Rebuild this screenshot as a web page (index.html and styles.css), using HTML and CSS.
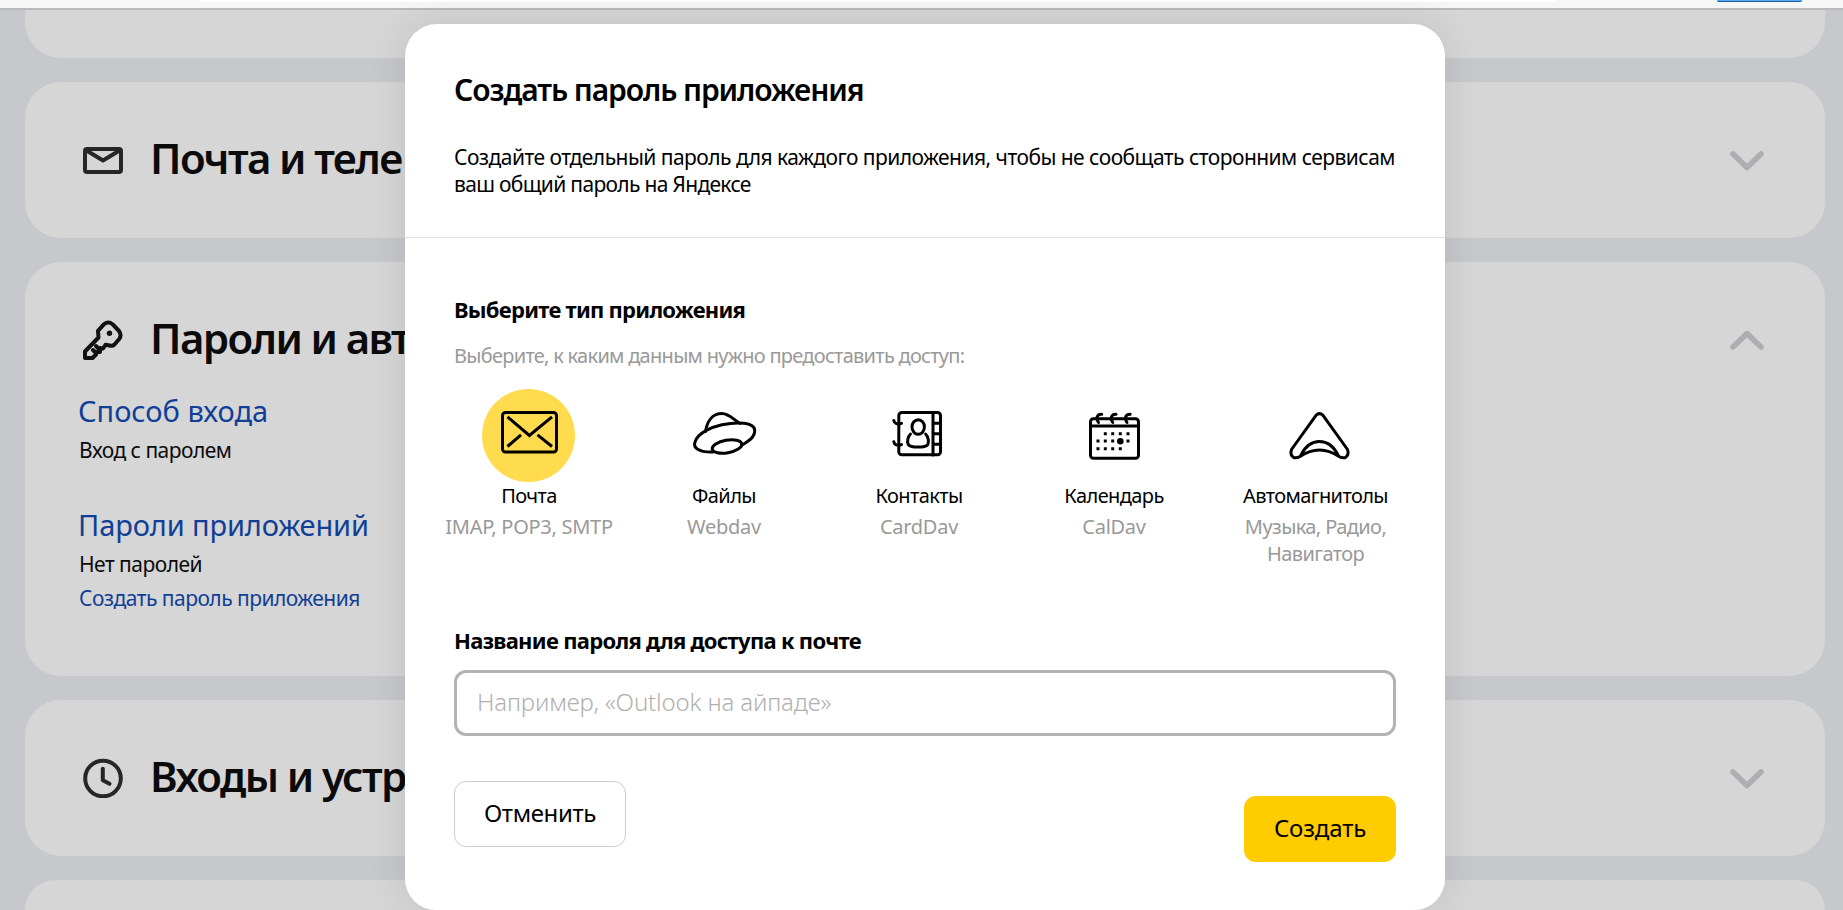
FILE: index.html
```html
<!DOCTYPE html>
<html lang="ru">
<head>
<meta charset="utf-8">
<title>Пароли приложений</title>
<link rel="stylesheet" href="styles.css">
</head>
<body>
<div class="browser-bar"><div class="address"></div><div class="profile-chip"></div></div>
<main class="page">
  <section class="card card-cut"></section>
  <section class="card">
    <header class="card-head">
      <svg class="card-icon" viewBox="0 0 40 40"><rect x="2" y="9" width="36" height="23" rx="2"/><path d="M3.500 10.500L20 20.500L36.500 10.500"/></svg>
      <h2 class="card-title">Почта и теле</h2>
      <svg class="chevron" viewBox="0 0 34 20"><path d="M3 3L17 16.500L31 3"/></svg>
    </header>
  </section>
  <section class="card card-open">
    <header class="card-head">
      <svg class="card-icon key" viewBox="0 0 40 40"><path d="M15 10.800L21 4.200Q25.300 0.800 29.500 4.200L36 11Q39 15.200 36.200 19L31.500 24.500Q29.500 26.500 26.500 25.500L22.500 24.800L20 28.500L17 28L17 32L13.500 32L13 34.500L9.500 38H2V31.500L15.500 17.500Z"/><path d="M13 26l4 4M10 30l3 3"/><circle cx="26.500" cy="13.300" r="2.700"/></svg>
      <h2 class="card-title">Пароли и авт</h2>
      <svg class="chevron" viewBox="0 0 34 20"><path d="M3 16L17 2.500L31 16"/></svg>
    </header>
    <div class="item">
      <a class="item-title">Способ входа</a>
      <p class="item-text">Вход с паролем</p>
    </div>
    <div class="item">
      <a class="item-title item-title-long">Пароли приложений</a>
      <p class="item-text">Нет паролей</p>
      <a class="item-link">Создать пароль приложения</a>
    </div>
  </section>
  <section class="card">
    <header class="card-head">
      <svg class="card-icon" viewBox="0 0 40 40"><circle cx="20" cy="20.500" r="17.800"/><path d="M19.800 10.700V22.300L26.500 25.800"/></svg>
      <h2 class="card-title">Входы и устр</h2>
      <svg class="chevron" viewBox="0 0 34 20"><path d="M3 3L17 16.500L31 3"/></svg>
    </header>
  </section>
  <section class="card card-next"></section>
</main>
<div class="dialog" role="dialog">
  <header class="dialog-head">
    <h1 class="dialog-title">Создать пароль приложения</h1>
    <p class="dialog-text">Создайте отдельный пароль для каждого приложения, чтобы не сообщать сторонним сервисам<br><span class="dialog-text-end">ваш общий пароль на Яндексе</span></p>
  </header>
  <form class="dialog-form">
    <h3 class="field-title">Выберите тип приложения</h3>
    <p class="hint">Выберите, к каким данным нужно предоставить доступ:</p>
    <div class="types">
      <div class="type selected">
        <svg class="type-icon" viewBox="0 0 93 93"><rect x="20.500" y="23.500" width="54" height="39.500" rx="3"/><path d="M25.500 27.800L47.400 46.500L70 27.800M25.500 57.500L39 45.800M70 57.500L55.500 45.800"/></svg>
        <div class="type-name">Почта</div><div class="type-sub">IMAP, POP3, SMTP</div>
      </div>
      <div class="type">
        <svg class="type-icon" viewBox="-1 0 93 93"><path d="M35 63C20 63.500 15 58.500 17 53C20 43.500 34 38 44 35.800C60 32.500 76 33.500 76.700 41C77 48 71 52 64 56"/><path d="M27.500 42.500C29 33 34 24.500 44 24.500C51 24.500 56 31 62 34.300"/><ellipse cx="49" cy="57.500" rx="15" ry="6.300" transform="rotate(-10 49 57.500)"/></svg>
        <div class="type-name">Файлы</div><div class="type-sub">Webdav</div>
      </div>
      <div class="type">
        <svg class="type-icon" viewBox="-1 0 93 93"><rect x="25.800" y="23.500" width="41.700" height="42.300" rx="3"/><path d="M60 23.500V66M60 34.300H67M60 44.700H67M60 55.300H67M20.800 31.500C21.300 34.500 24.300 36 28.500 34.300M20.800 52.800C21.300 55.800 24.300 57.300 28.500 55.600"/><ellipse cx="45.200" cy="38" rx="6.200" ry="7.300"/><path d="M37.500 45C34.500 48 34 53 35.300 55.500C37 58.900 53 58.900 54.800 55.500C56 53 55.600 48 52.600 45"/></svg>
        <div class="type-name">Контакты</div><div class="type-sub">CardDav</div>
      </div>
      <div class="type">
        <svg class="type-icon" viewBox="-1 0 93 93"><rect x="22.500" y="29.800" width="48" height="39.400" rx="3"/><path d="M22.500 37H70.500M30.500 33.500C27.500 29 29 25.300 33.700 25.300M44.800 33.500C41.800 29 43.300 25.300 48 25.300M59 33.500C56 29 57.500 25.300 62.200 25.300"/><path class="dots" d="M35.800 44.700h3M43.200 44.700h3M50.800 44.700h3M58.500 44.700h3M28.500 52h3M35.800 52h3M43.200 52h3M58.500 52h3M28.500 59.700h3M35.800 59.700h3M43.200 59.700h3M50.800 59.700h3"/><circle class="solid" cx="52.300" cy="52.200" r="3.300"/></svg>
        <div class="type-name">Календарь</div><div class="type-sub">CalDav</div>
      </div>
      <div class="type">
        <svg class="type-icon" viewBox="0 0 93 93"><path d="M47 26.300Q50.500 22.800 54 26.300L78.500 60.500Q80.500 66 76 68.700Q73 69.300 70 67.500Q50.500 54.500 31 67.500Q28 69.300 25 68.700Q20.500 66 22.500 60.500Z"/><path d="M32 66C41 48 60 48 69 66"/></svg>
        <div class="type-name">Автомагнитолы</div><div class="type-sub type-sub-long">Музыка, Радио,<br>Навигатор</div>
      </div>
    </div>
    <h3 class="field-title name-title">Название пароля для доступа к почте</h3>
    <div class="input">Например, «Outlook на айпаде»</div>
    <footer class="actions"><button type="button" class="btn cancel">Отменить</button><button type="button" class="btn create">Создать</button></footer>
  </form>
</div>
</body>
</html>
```
FILE: styles.css
```css
* { box-sizing: border-box; margin: 0; }
html { height: 910px; overflow: hidden; }
body { height: 910px; overflow: hidden; background: #c7c8cc; color: #000; font-family: "Noto Sans", sans-serif; font-size: 21px; line-height: 27px; }
.browser-bar { height: 10px; padding: 0 41px 0 200px; display: flex; justify-content: space-between; background: #f6f6f6; border-bottom: 2px solid #b9b9bb; }
.address { width: 1356px; height: 2px; background: #fff; }
.profile-chip { width: 85px; height: 2px; background: #5aa9ee; border-bottom: 1px solid #17619f; border-radius: 0 0 8px 8px; }
.page { display: flex; flex-direction: column; gap: 24px; height: 900px; overflow: hidden; padding: 0 18px 0 25px; }
.card { height: 156px; flex: none; padding: 39px 61px 0 54px; border-radius: 36px; background: #d6d6d6; }
.card-cut { height: 48px; border-radius: 0 0 36px 36px; }
.card-open { height: 414px; }
.card-next { height: 30px; padding: 0; border-radius: 36px 36px 0 0; }
.card-head { display: flex; align-items: center; height: 78px; padding-left: 4px; }
.card-icon { width: 40px; height: 40px; fill: none; stroke: #262626; stroke-width: 4; stroke-linejoin: round; stroke-linecap: round; }
.card-icon.key { stroke: #111; }
.key circle { fill: #111; stroke: none; }
.card-title { flex: 1; margin-left: 27px; padding-bottom: 4px; color: #0b0b0b; font-size: 42px; line-height: 74px; font-weight: 600; letter-spacing: -1.6px; white-space: nowrap; }
.chevron { width: 34px; height: 20px; margin-top: 1px; fill: none; stroke: #acaeb2; stroke-width: 5.6; stroke-linecap: round; stroke-linejoin: round; }
.item { display: flex; flex-direction: column; margin-top: 14px; }
.item + .item { margin-top: 43px; }
.item-title { font-size: 29px; line-height: 36px; color: #113f97; margin-left: -1px; }
.item-title-long { letter-spacing: -.12px; }
.item-text { margin-top: 8px; color: #0b0b0b; letter-spacing: -.52px; }
.item-link { margin-top: 7px; color: #113f97; letter-spacing: -.53px; }
.dialog { position: absolute; left: 405px; top: 24px; width: 1040px; height: 886px; background: #fff; border-radius: 32px 32px 31px 31px; box-shadow: 0 0 40px rgba(0, 0, 0, .1); }
.dialog-head { padding: 48px 49px 39px; border-bottom: 1px solid #e2e2e2; }
.dialog-title { font-size: 30px; line-height: 36px; font-weight: 600; letter-spacing: -1.08px; }
.dialog-text { margin-top: 36px; white-space: nowrap; letter-spacing: -.53px; }
.dialog-text-end { letter-spacing: -.68px; }
.dialog-form { padding: 56px 49px 0; }
.field-title { font-size: 22px; line-height: 30px; font-weight: 700; letter-spacing: -.74px; }
.hint { margin-top: 18px; color: #999; font-size: 20px; letter-spacing: -.72px; white-space: nowrap; }
.types { display: grid; grid-template-columns: repeat(4, 195px) 208px; margin: 20px 0 0 -23px; font-size: 20px; text-align: center; white-space: nowrap; }
.type { display: flex; flex-direction: column; align-items: center; }
.type-icon { width: 93px; height: 93px; border-radius: 50%; fill: none; stroke: #000; stroke-width: 3; stroke-linecap: round; stroke-linejoin: round; }
.selected .type-icon { background: #ffdb4d; stroke-linecap: butt; stroke-linejoin: miter; }
.type-icon .dots { stroke-linecap: butt; }
.type-icon .solid { fill: #000; stroke: none; }
.type-name { padding-left: 1px; letter-spacing: -.6px; }
.type-sub { margin-top: 4px; padding-left: 1px; color: #999; letter-spacing: -.28px; }
.type-sub-long { letter-spacing: -.6px; }
.name-title { margin-top: 58px; letter-spacing: -.7px; }
.input { height: 66px; margin-top: 15px; padding: 0 20px; border: 3px solid #b3b3b3; border-radius: 12px; color: #b0b0b0; font-size: 24px; font-weight: 300; line-height: 58px; letter-spacing: -.14px; }
.actions { display: flex; justify-content: space-between; align-items: flex-start; margin-top: 45px; }
.btn { height: 66px; border-radius: 12px; padding: 0 0 2px; font: 24px/60px "Noto Sans", sans-serif; color: #000; }
.cancel { width: 172px; border: 1px solid #ccc; background: #fff; letter-spacing: -.35px; }
.create { width: 152px; margin-top: 15px; border: 0; background: #fc0; letter-spacing: -.15px; }
```
